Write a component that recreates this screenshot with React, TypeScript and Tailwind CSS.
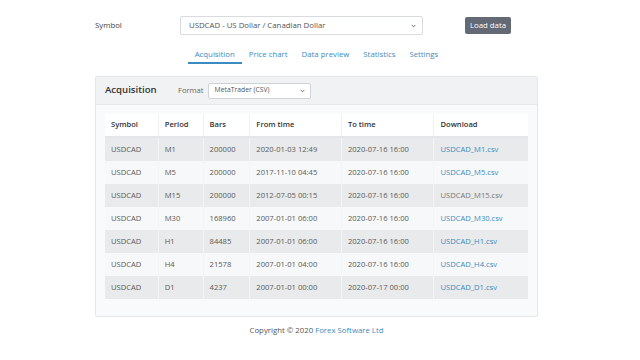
import React from "react";

const rows = [
  ["USDCAD", "M1", "200000", "2020-01-03 12:49", "2020-07-16 16:00", "USDCAD_M1.csv"],
  ["USDCAD", "M5", "200000", "2017-11-10 04:45", "2020-07-16 16:00", "USDCAD_M5.csv"],
  ["USDCAD", "M15", "200000", "2012-07-05 00:15", "2020-07-16 16:00", "USDCAD_M15.csv"],
  ["USDCAD", "M30", "168960", "2007-01-01 06:00", "2020-07-16 16:00", "USDCAD_M30.csv"],
  ["USDCAD", "H1", "84485", "2007-01-01 06:00", "2020-07-16 16:00", "USDCAD_H1.csv"],
  ["USDCAD", "H4", "21578", "2007-01-01 04:00", "2020-07-16 16:00", "USDCAD_H4.csv"],
  ["USDCAD", "D1", "4237", "2007-01-01 00:00", "2020-07-17 00:00", "USDCAD_D1.csv"],
];

const widths = ["w-[54px]", "w-[45px]", "w-[47px]", "w-[92px]", "w-[93px]", "w-[94px]"];

function Chevron() {
  return (
    <svg width="5" height="4" viewBox="0 0 5 4" className="shrink-0">
      <path d="M0.7 1 L2.5 2.8 L4.3 1" stroke="#666" strokeWidth="1" fill="none" />
    </svg>
  );
}

export default function App() {
  return (
    <div
      className="w-[640px] h-[360px] bg-white text-[#5a5a5a] text-[7.6px] overflow-hidden"
      style={{ fontFamily: '"Open Sans", "Noto Sans", sans-serif' }}
    >
      <div className="ml-[95px] w-[443px] pt-[16px]">
        {/* Symbol row */}
        <div className="flex items-center h-[19px] text-[7.8px]">
          <div className="w-[85px] text-[#444]">Symbol</div>
          <div className="w-[243px] h-[19px] border border-[#d8dce0] rounded-[2px] flex items-center justify-between pl-[8px] pr-[6px] text-[#555]">
            <span>USDCAD - US Dollar / Canadian Dollar</span>
            <Chevron />
          </div>
          <div className="ml-[42px] w-[46px] h-[17px] bg-[#636975] rounded-[2px] text-white flex items-center justify-center">
            Load data
          </div>
        </div>

        {/* Tabs */}
        <div className="flex justify-center mt-[14px] h-[17px] text-[#3a8cc0] text-[7.8px]">
          <div className="flex items-start">
            <div className="px-[7px] h-[15px] border-b-2 border-[#3a8cc0] flex items-start">Acquisition</div>
            <div className="px-[7px]">Price chart</div>
            <div className="px-[7px]">Data preview</div>
            <div className="px-[7px]">Statistics</div>
            <div className="px-[7px]">Settings</div>
          </div>
        </div>

        {/* Card */}
        <div className="mt-[10px] border border-[#e4e7ea] rounded-[2px] bg-[#f9fafb]">
          <div className="h-[28px] bg-[#f1f2f4] border-b border-[#e6e8eb] flex items-center pl-[9px]">
            <div className="text-[9.6px] font-semibold text-[#333] w-[73px]">Acquisition</div>
            <div className="text-[#666] mr-[4px]">Format</div>
            <div className="w-[103px] h-[16px] bg-white border border-[#cfd3d8] rounded-[2px] flex items-center justify-between pl-[6px] pr-[5px] text-[6.8px] text-[#555]">
              <span>MetaTrader (CSV)</span>
              <Chevron />
            </div>
          </div>
          <div className="px-[9px] pt-[9px] pb-[17px]">
            <div className="flex flex-col">
              <div className="flex h-[24px] bg-white font-semibold text-[#333] border-b-2 border-[#e4e6e9]">
                {["Symbol", "Period", "Bars", "From time", "To time", "Download"].map((h, i) => (
                  <div
                    key={h}
                    className={`${widths[i]} flex items-center pl-[6px] ${i < 5 ? "border-r border-[#f0f1f3]" : ""}`}
                  >
                    {h}
                  </div>
                ))}
              </div>
              {rows.map((r, ri) => (
                <div
                  key={ri}
                  className={`flex h-[23px] ${ri % 2 === 0 ? "bg-[#e9eaeb]" : "bg-[#f7f8f9]"}`}
                >
                  {r.map((c, i) => (
                    <div
                      key={i}
                      className={`${widths[i]} flex items-center pl-[6px] ${i < 5 ? "border-r border-[#f3f4f5]" : ""} ${
                        i === 5 ? (ri === 2 ? "text-[#777]" : "text-[#3a8cc0]") : ""
                      }`}
                    >
                      {c}
                    </div>
                  ))}
                </div>
              ))}
            </div>
          </div>
        </div>

        {/* Footer */}
        <div className="mt-[8px] text-center text-[#555] text-[7.8px]">
          Copyright © 2020 <span className="text-[#3a8cc0]">Forex Software Ltd</span>
        </div>
      </div>
    </div>
  );
}
